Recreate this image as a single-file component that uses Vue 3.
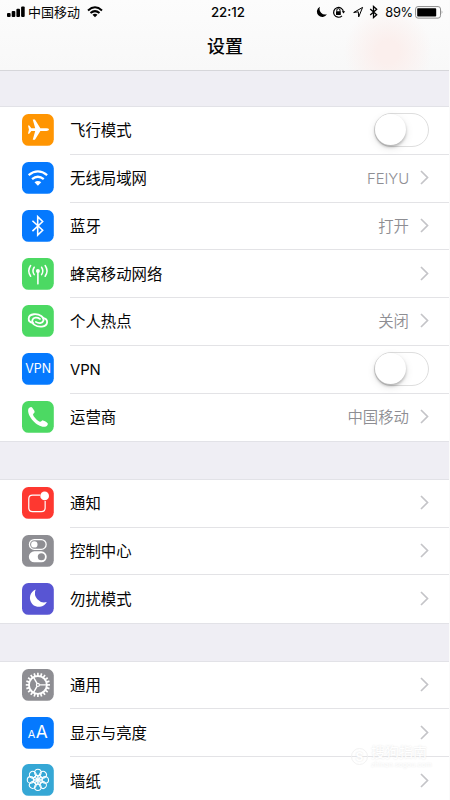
<script setup>
const groups = [
  [
    { icon: 'plane', color: '#ff9502', label: '飞行模式', toggle: true },
    { icon: 'wifi', color: '#0579fe', label: '无线局域网', value: 'FEIYU' },
    { icon: 'bluetooth', color: '#0579fe', label: '蓝牙', value: '打开' },
    { icon: 'cellular', color: '#4cd963', label: '蜂窝移动网络' },
    { icon: 'hotspot', color: '#4cd963', label: '个人热点', value: '关闭' },
    { icon: 'vpn', color: '#0579fe', label: 'VPN', toggle: true },
    { icon: 'phone', color: '#4cd963', label: '运营商', value: '中国移动' },
  ],
  [
    { icon: 'notify', color: '#fe3830', label: '通知' },
    { icon: 'control', color: '#8e8e93', label: '控制中心' },
    { icon: 'moon', color: '#5855d3', label: '勿扰模式' },
  ],
  [
    { icon: 'gear', color: '#8e8e93', label: '通用' },
    { icon: 'display', color: '#0579fe', label: '显示与亮度' },
    { icon: 'flower', color: '#35a7d5', label: '墙纸' },
  ],
]
const teeth = Array.from({ length: 20 }, (_, i) => i * 18)
const petals = Array.from({ length: 8 }, (_, i) => i * 45)
const isLatin = (text) => /^[A-Z]+$/.test(text)
</script>

<template>
  <div class="screen">
    <header class="top">
      <div class="status">
        <div class="side left">
          <svg class="signal" width="19" height="12" viewBox="0 0 19 12">
            <rect x="0" y="7" width="3.6" height="4" rx="1" />
            <rect x="4.7" y="5" width="3.6" height="6" rx="1" />
            <rect x="9.4" y="2.8" width="3.6" height="8.2" rx="1" />
            <rect x="14.1" y="0.5" width="3.6" height="10.5" rx="1" />
          </svg>
          <span class="carrier">中国移动</span>
          <svg class="net" width="16" height="12" viewBox="0 0 16 12">
            <path d="M1 4.4 Q8-1.8 15 4.4M3.5 7.1Q8 3.1 12.5 7.1" fill="none" stroke="#000" stroke-width="2" />
            <path d="M8 11.2 5.5 8.8Q8 6.9 10.5 8.8Z" />
          </svg>
        </div>
        <span class="time">22:12</span>
        <div class="side right">
          <svg width="63" height="14" viewBox="0 0 63 14">
            <path d="M4 1.7A5.4 5.4 0 1 0 11 9.3 5.7 5.7 0 0 1 4 1.7Z" />
            <g fill="none" stroke="#000">
              <path d="M26 10.8A4.9 4.9 0 1 1 27.4 6.8" stroke-width="1.2" />
              <path d="M20.8 6.6V5.2a1.6 1.6 0 0 1 3.2 0v1.4" stroke-width="1" />
              <path d="M37.7 7.5 46.6 2.4 42.7 11.9 42.3 6.8Z" stroke-width="1" stroke-linejoin="round" />
              <path d="M54.2 4 60.7 9.7 57.5 12.5V1.5L60.7 4.3 54.2 10" stroke-width="1.3" />
            </g>
            <rect x="20" y="6.2" width="4.8" height="3.8" rx=".5" />
            <path d="M25.8 6.3h3.4l-1.7 2.3Z" />
          </svg>
          <span class="percent">89%</span>
          <svg class="battery" width="29" height="13" viewBox="0 0 29 13">
            <rect x=".6" y=".6" width="24.9" height="11.5" rx="2.4" fill="#fff" stroke="#8c8c8c" />
            <rect x="2.2" y="2.2" width="19" height="8.3" rx=".8" />
            <path d="M26.7 4.3q1.7 2 0 4Z" fill="#8c8c8c" />
          </svg>
        </div>
      </div>
      <h1>设置</h1>
    </header>

    <main>
      <section v-for="(group, g) in groups" :key="g" class="group">
        <div v-for="row in group" :key="row.label" class="row">
          <svg class="icon" viewBox="0 0 32 32">
            <rect width="32" height="32" rx="6.5" :fill="row.color" />
            <path v-if="row.icon === 'plane'" fill="#fff" d="M27.2 15.7Q27 17 24.5 17H18.5L13 26H10.8L13.3 17H9.4L7.3 19.8H6L7 15.7 6 11.6H7.3L9.4 14.4H13.3L10.8 5.6H13L18.5 14.4H24.5Q27 14.4 27.2 15.7Z" />
            <g v-else-if="row.icon === 'wifi'">
              <path d="M6.7 13.2Q16 5.6 25.3 13.2M10.1 17.2Q16 12.4 21.9 17.2" fill="none" stroke="#fff" stroke-width="2.3" />
              <path d="M16 23.8 12.6 20.3Q16 17.7 19.4 20.3Z" fill="#fff" />
            </g>
            <path v-else-if="row.icon === 'bluetooth'" d="M10.5 10.8 20.8 20.4 15.8 25.3V6.7L20.8 11.6 10.5 21.2" fill="none" stroke="#fff" stroke-width="1.6" />
            <g v-else-if="row.icon === 'cellular'" fill="none" stroke="#fff" stroke-width="1.5" stroke-linecap="round">
              <circle cx="16" cy="13" r="2" fill="#fff" stroke="none" />
              <path d="M16 13V26" stroke-width="1.6" />
              <path d="M12.3 9.3Q9.8 13 12.3 16.7M19.7 9.3Q22.2 13 19.7 16.7M8.7 7.6Q4.9 13 8.7 18.4M23.3 7.6Q27.1 13 23.3 18.4" />
            </g>
            <g v-else-if="row.icon === 'hotspot'" fill="none" stroke="#fff" stroke-width="1.8" stroke-linecap="round">
              <path d="M11.1 18.1C4.9 17 5.4 10 11.9 9.3C18 8.7 22.5 12.3 21.6 15.7C20.8 18.9 16.6 18.9 13.9 17" />
              <path d="M20.9 12.9C27.1 14 26.6 21 20.1 21.7C14 22.3 9.5 18.7 10.4 15.3C11.2 12.1 15.4 12.1 18.1 14" />
            </g>
            <text v-else-if="row.icon === 'vpn'" x="16.3" y="20.6" class="glyph" font-size="13.6" textLength="26" lengthAdjust="spacingAndGlyphs">VPN</text>
            <path v-else-if="row.icon === 'phone'" fill="#fff" d="M6.2 8.8C6.5 7.2 8.2 6 9.3 6.1C10.2 6.2 12.5 9.5 12.7 10.7C12.9 12 11.2 12.4 11.1 13.6C11.1 15.6 16.2 20.7 18.2 21C19.5 21.1 20 19.4 21.2 19.5C22.5 19.7 25.8 21.8 26 22.8C26.2 24 24.6 25.7 23.1 25.9C16 27 5.2 15.7 6.2 8.8Z" />
            <g v-else-if="row.icon === 'notify'">
              <path d="M18.3 8.2H10.7Q6.8 8.2 6.8 12V21Q6.8 24.8 10.7 24.8H19.4Q23.3 24.8 23.3 21V14" fill="none" stroke="#fff" stroke-width="1.2" />
              <circle cx="22.8" cy="9" r="4.4" fill="#fff" />
            </g>
            <g v-else-if="row.icon === 'control'">
              <rect x="7.5" y="4.7" width="16.8" height="9.7" rx="4.85" fill="none" stroke="#fff" stroke-width="1.3" />
              <circle cx="12.4" cy="9.5" r="3.2" fill="#fff" />
              <rect x="6.9" y="16.4" width="18" height="11" rx="5.5" fill="#fff" />
              <circle cx="19.5" cy="21.9" r="3.6" :fill="row.color" />
            </g>
            <path v-else-if="row.icon === 'moon'" fill="#fff" d="M13.8 6.6A9 9 0 1 0 25 19.1 9.3 9.3 0 0 1 13.8 6.6Z" />
            <g v-else-if="row.icon === 'gear'" fill="none" stroke="#fff" stroke-width="1.5">
              <circle cx="16" cy="16" r="9" stroke-width="1.9" />
              <path v-for="a in teeth" :key="a" d="M16 3.8V7" stroke-width="1.7" :transform="`rotate(${a} 16 16)`" />
              <path d="M16 16H25M16 16 11.5 8.2M16 16 11.5 23.8" stroke-width="1.4" />
              <circle cx="16" cy="16" r="1.5" fill="#8e8e93" stroke-width="1.2" />
            </g>
            <g v-else-if="row.icon === 'display'">
              <text x="9.6" y="20.7" class="glyph" font-size="11">A</text>
              <text x="20" y="20.7" class="glyph" font-size="17.5">A</text>
            </g>
            <g v-else fill="none" stroke="#fff" stroke-width="1.1">
              <circle v-for="a in petals" :key="a" cx="16" cy="8.6" r="3.3" :transform="`rotate(${a} 16 16)`" />
              <circle v-for="a in petals" :key="'i' + a" cx="16" cy="12.7" r="1.8" stroke-width=".9" :transform="`rotate(${a + 22.5} 16 16)`" />
              <circle cx="16" cy="16" r="1.7" fill="#fff" stroke="none" />
            </g>
          </svg>
          <div class="content">
            <span class="label" :class="{ latin: isLatin(row.label) }">{{ row.label }}</span>
            <span v-if="row.value" class="value" :class="{ latin: isLatin(row.value) }">{{ row.value }}</span>
            <span v-if="row.toggle" class="toggle"><i></i></span>
            <svg v-else class="chevron" width="9" height="15" viewBox="0 0 9 15">
              <path d="M1 1 7.5 7.5 1 14" fill="none" stroke="#c4c4c8" stroke-width="1.7" />
            </svg>
          </div>
        </div>
      </section>
    </main>
    <div class="watermark">
      <b>S</b>
      <div><span>搜狗指南</span><small>zhinan.sogou.com</small></div>
    </div>
  </div>
</template>

<style>
body {
  overflow: hidden;
  background: #efeef4;
}
</style>

<style scoped>
.screen {
  position: relative;
  height: 800px;
  overflow: hidden;
  box-sizing: border-box;
  background: #efeef4;
  color: #050505;
  font-family: Inter, "Noto Sans CJK SC", sans-serif;
  border-right: 1px solid #fafafa;
}
.top {
  height: 70.5px;
  box-sizing: border-box;
  border-bottom: 1px solid #d6d6da;
  background:
    radial-gradient(ellipse 44px 46px at 388px 52px, #fbefed 25%, rgba(251, 239, 237, 0)),
    linear-gradient(#fcfcfc, #f8f8f8);
}
.status {
  display: grid;
  grid-template-columns: 1fr auto 1fr;
  align-items: center;
  height: 23px;
  padding: 0 5px 0 7px;
  font-size: 13px;
  line-height: 23px;
}
.side {
  display: flex;
  align-items: center;
}
.right {
  justify-content: flex-end;
}
.signal {
  margin-right: 2px;
}
.net {
  margin-left: 7px;
}
.time {
  font-weight: 550;
  font-size: 13.3px;
  padding: 1px 0 0 5px;
}
.percent {
  margin: 1px 2px 0 6px;
  font-size: 12.8px;
  letter-spacing: -0.2px;
}
h1 {
  margin: 0;
  height: 46px;
  line-height: 47px;
  padding-left: 1px;
  text-align: center;
  font-size: 18px;
  font-weight: 500;
}
.group {
  margin-top: 36.5px;
  box-shadow: 0 0 0 1px #e2e2e7;
  background: #fff;
}
.group + .group {
  margin-top: 38.5px;
}
.row {
  display: flex;
  align-items: center;
  height: 47.75px;
  padding-left: 22px;
}
.icon {
  width: 31.8px;
  height: 31.8px;
  margin: -1px 16.2px 0 0;
  flex: none;
}
.glyph {
  fill: #fff;
  text-anchor: middle;
  font-family: Inter, sans-serif;
}
.content {
  flex: 1;
  display: flex;
  align-items: center;
  align-self: stretch;
  box-sizing: border-box;
  padding-right: 20px;
  border-bottom: 1px solid #e3e3e6;
}
.row:last-child .content {
  border-bottom: 0;
}
.label,
.value {
  font-size: 15.4px;
  line-height: 24px;
  padding-top: 2px;
}
.label {
  margin-right: auto;
}
.value {
  color: #8e8e93;
  margin-right: 11px;
  font-weight: 350;
}
.latin {
  font-size: 14.9px;
  letter-spacing: -0.1px;
}
.toggle {
  width: 55px;
  height: 34px;
  box-sizing: border-box;
  border: 1.5px solid #dedede;
  border-radius: 17px;
}
.toggle i {
  display: block;
  width: 31px;
  height: 31px;
  border-radius: 50%;
  background: #fff;
  box-shadow: 0 2px 3px rgba(0, 0, 0, 0.25), 0 3px 8px rgba(0, 0, 0, 0.1);
}
.chevron {
  margin-top: -1px;
}
.watermark {
  position: absolute;
  left: 351px;
  top: 743px;
  display: flex;
  align-items: center;
  gap: 3px;
  color: #fff;
  text-shadow: 0 0 2px #e0e0e0;
}
.watermark b {
  width: 15px;
  height: 15px;
  border: 1px solid #f2f2f2;
  border-radius: 50%;
  text-align: center;
  font-size: 12px;
  line-height: 15px;
}
.watermark span,
.watermark small {
  display: block;
}
.watermark span {
  font-size: 14px;
  line-height: 18px;
}
.watermark small {
  font-size: 7px;
  line-height: 8px;
}
</style>
